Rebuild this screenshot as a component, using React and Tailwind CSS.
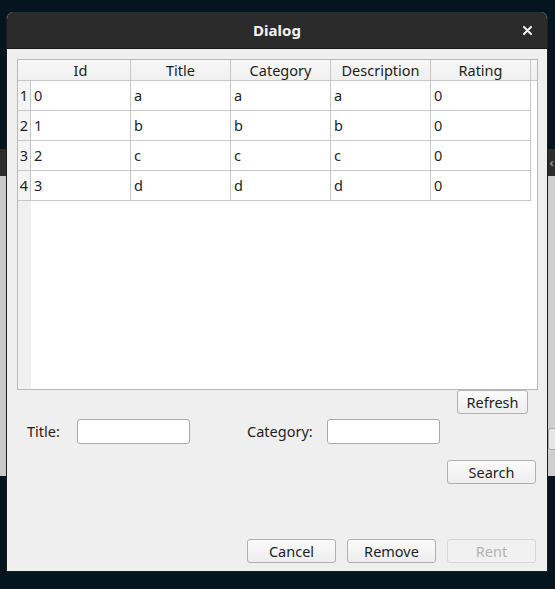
import React from 'react';

const columns = ['Id', 'Title', 'Category', 'Description', 'Rating'];

const rows = [
  ['0', 'a', 'a', 'a', '0'],
  ['1', 'b', 'b', 'b', '0'],
  ['2', 'c', 'c', 'c', '0'],
  ['3', 'd', 'd', 'd', '0'],
];

const Button = ({ children, className = '', disabled = false }) => (
  <button
    className={
      'h-[24px] rounded-[3px] border text-[14.5px] leading-none ' +
      (disabled
        ? 'border-[#d6d6d6] bg-[#f1f1f1] text-[#b4b4b4] '
        : 'border-[#b0b0b0] bg-gradient-to-b from-[#fbfbfb] to-[#ededed] text-[#1e1e1e] ') +
      className
    }
  >
    {children}
  </button>
);

const Table = () => (
  <div className="ml-[10px] mt-[10px] flex h-[331px] w-[521px] flex-col border border-[#b8b8b8] bg-white">
    <div className="flex h-[21px] border-b border-[#c6c6c6] bg-gradient-to-b from-[#f7f7f7] to-[#f0f0f0]">
      <div className="w-[13px]" />
      {columns.map((c) => (
        <div
          key={c}
          className="flex w-[100px] items-center justify-center border-r border-[#c6c6c6] pt-[2px] text-[14.5px] text-[#1e1e1e]"
        >
          {c}
        </div>
      ))}
      <div className="flex-1" />
    </div>
    <div className="flex flex-1">
      <div className="flex w-[13px] flex-col bg-[#f0f0f0]">
        {rows.map((r, i) => (
          <div
            key={i}
            className="flex h-[30px] items-center justify-center border-b border-r border-[#c6c6c6] bg-[#f4f4f4] text-[14.5px] text-[#1e1e1e]"
          >
            {i + 1}
          </div>
        ))}
      </div>
      <div className="flex flex-1 flex-col">
        {rows.map((r, i) => (
          <div key={i} className="flex h-[30px]">
            {r.map((v, j) => (
              <div
                key={j}
                className="flex w-[100px] items-center border-b border-r border-[#c6c6c6] pl-[3px] text-[14.5px] text-[#1e1e1e]"
              >
                {v}
              </div>
            ))}
          </div>
        ))}
      </div>
    </div>
  </div>
);

const App = () => {
  return (
    <div
      className="relative h-[589px] w-[555px] overflow-hidden bg-[#04151f]"
      style={{ fontFamily: '"Noto Sans", "Open Sans", sans-serif' }}
    >
      {/* window behind the dialog */}
      <div className="absolute left-0 right-0 top-[149px] flex h-[327px] flex-col">
        <div className="flex h-[27px] items-center justify-end bg-[#2c2c2c] pr-[1px] text-[13px] font-bold text-[#8a8a8a]">
          ‹
        </div>
        <div className="flex-1 bg-gradient-to-r from-[#c9c9c9] via-[#d9d9d9] to-[#cfcfcf]" />
      </div>
      <div className="absolute left-[548px] top-[428px] h-[22px] w-[20px] rounded-[3px] border border-[#a8a8a8] bg-[#e6e6e6]" />

      {/* dialog */}
      <div className="absolute left-[6px] top-[12px] flex h-[560px] w-[542px] flex-col overflow-hidden rounded-t-[7px] border-x border-b border-[#1c1c1c] bg-[#efefef]">
        <div className="relative flex h-[37px] items-center justify-center border-b border-[#161616] bg-[#2b2b2b]">
          <span className="text-[15px] font-bold text-[#f2f2f2]">Dialog</span>
          <svg
            className="absolute right-[15px] top-[14px]"
            width="9"
            height="9"
            viewBox="0 0 9 9"
            fill="none"
            stroke="#f2f2f2"
            strokeWidth="2"
            strokeLinecap="round"
          >
            <path d="M1 1L8 8M8 1L1 8" />
          </svg>
        </div>

        <Table />

        <div className="flex justify-end pr-[19px]">
          <Button className="w-[71px]">Refresh</Button>
        </div>

        <div className="mt-[5px] flex items-center">
          <span className="ml-[20px] w-[50px] text-[14.5px] text-[#1e1e1e]">Title:</span>
          <div className="h-[25px] w-[113px] rounded-[3px] border border-[#a9a9a9] bg-white" />
          <span className="ml-[57px] w-[80px] text-[14.5px] text-[#1e1e1e]">Category:</span>
          <div className="h-[25px] w-[113px] rounded-[3px] border border-[#a9a9a9] bg-white" />
        </div>

        <div className="mt-[16px] flex justify-end pr-[11px]">
          <Button className="w-[89px]">Search</Button>
        </div>

        <div className="mt-auto mb-[8px] flex justify-end gap-[11px] pr-[11px]">
          <Button className="w-[89px]">Cancel</Button>
          <Button className="w-[89px]">Remove</Button>
          <Button className="w-[89px]" disabled>
            Rent
          </Button>
        </div>
      </div>
    </div>
  );
};

export default App;
